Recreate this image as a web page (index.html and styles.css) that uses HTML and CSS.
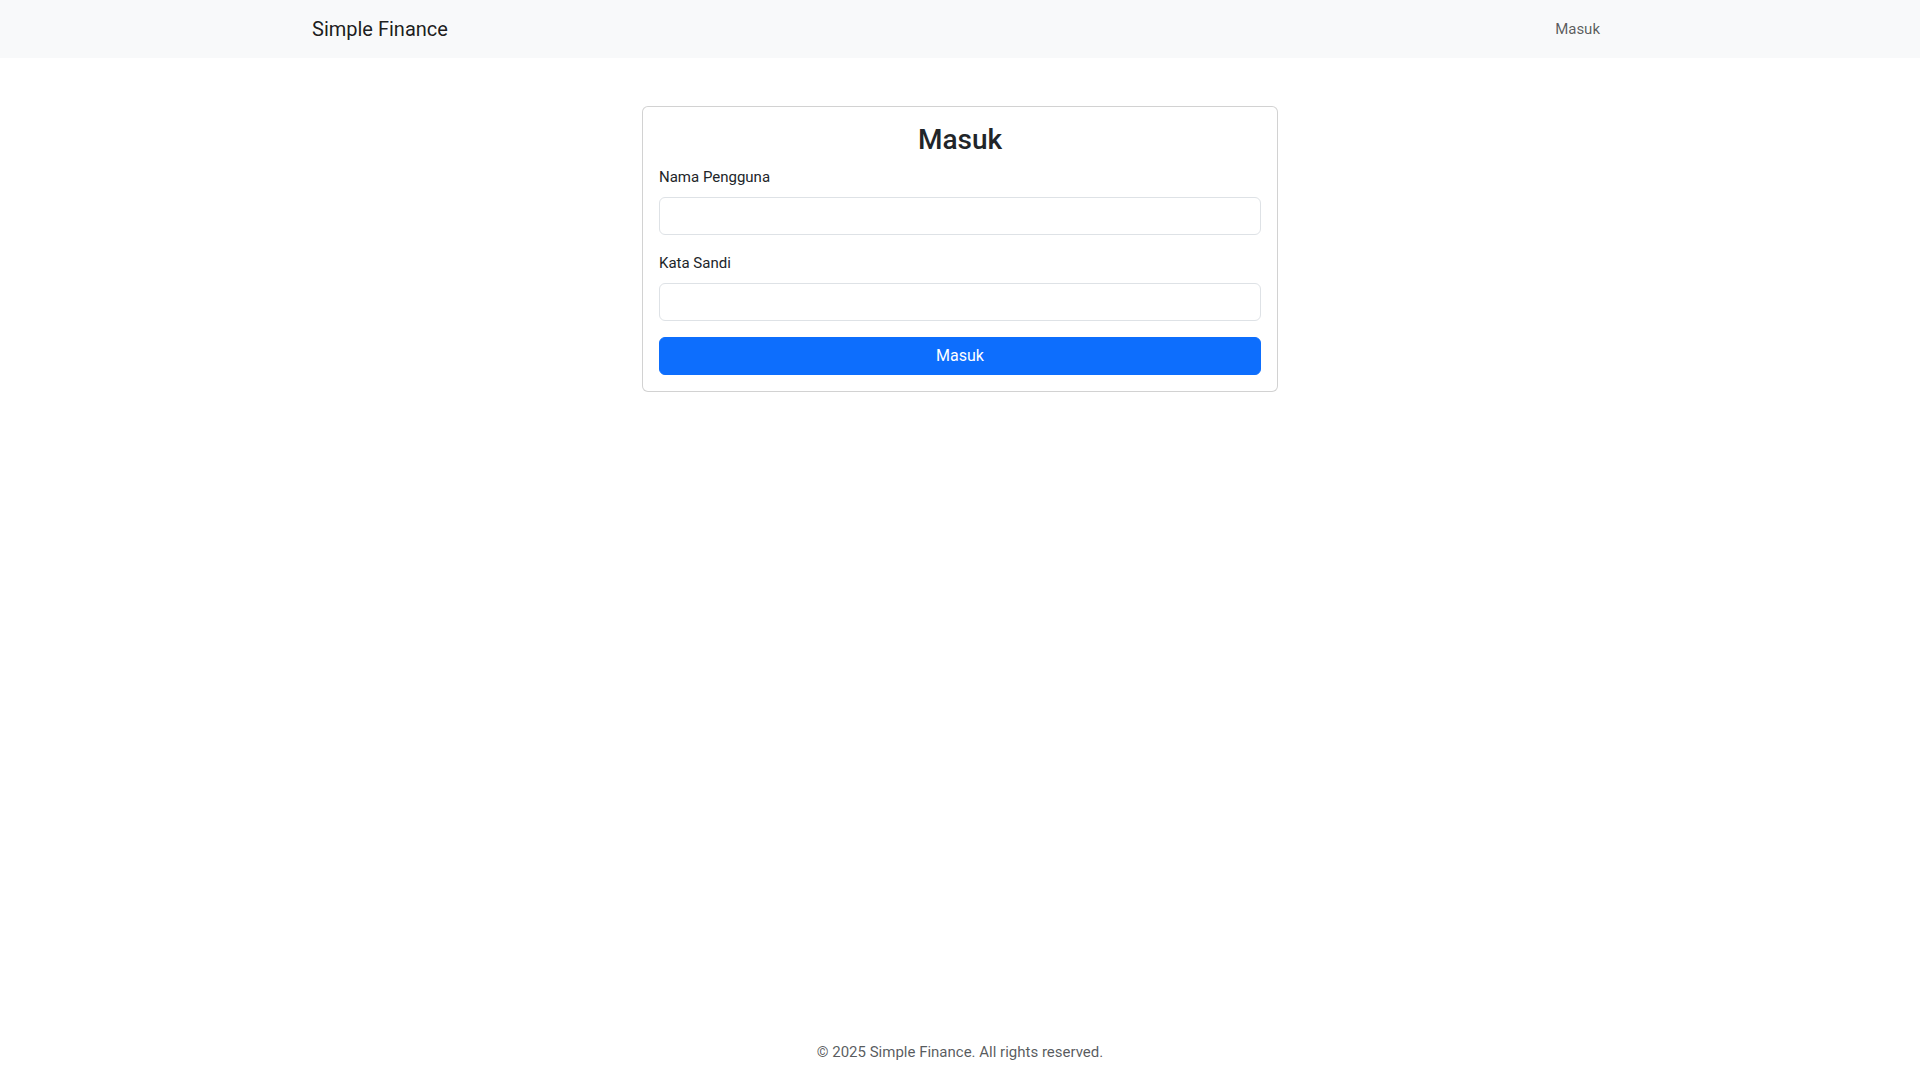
FILE: index.html
```html
<!DOCTYPE html>
<html lang="id">
<head>
<meta charset="utf-8">
<title>Masuk - Simple Finance</title>
<link rel="stylesheet" href="styles.css">
</head>
<body>
<div class="page">
  <nav class="navbar">
    <div class="container nav-inner">
      <a class="brand" href="#">Simple Finance</a>
      <ul class="nav-list">
        <li><a class="nav-link" href="#">Masuk</a></li>
      </ul>
    </div>
  </nav>
  <main class="container main">
    <div class="row">
      <div class="col">
        <div class="card">
          <div class="card-body">
            <h3 class="card-title">Masuk</h3>
            <form class="login-form">
              <div class="field">
                <label class="form-label" for="username">Nama Pengguna</label>
                <input class="form-control" type="text" id="username" name="username">
              </div>
              <div class="field">
                <label class="form-label" for="password">Kata Sandi</label>
                <input class="form-control" type="password" id="password" name="password">
              </div>
              <button class="btn-primary" type="submit">Masuk</button>
            </form>
          </div>
        </div>
      </div>
    </div>
  </main>
  <footer class="footer">
    <p class="footer-text">© 2025 Simple Finance. All rights reserved.</p>
  </footer>
</div>
</body>
</html>
```

FILE: styles.css
```css
* {
  box-sizing: border-box;
}

html, body {
  margin: 0;
  padding: 0;
}

body {
  font-family: Roboto, "Liberation Sans", Arial, sans-serif;
  font-size: 15px;
  line-height: 24px;
  color: #212529;
  background: #ffffff;
}

.page {
  min-height: 100vh;
  display: flex;
  flex-direction: column;
}

.container {
  width: 100%;
  max-width: 1320px;
  margin: 0 auto;
  padding: 0 12px;
}

.navbar {
  background: #f8f9fa;
  padding: 9px 0;
}

.nav-inner {
  display: flex;
  align-items: center;
  justify-content: space-between;
}

.brand {
  font-size: 20px;
  line-height: 30px;
  padding: 5px 0;
  color: rgba(0, 0, 0, 0.9);
  text-decoration: none;
  margin-right: 16px;
}

.nav-list {
  list-style: none;
  margin: 0;
  padding: 0;
  display: flex;
}

.nav-link {
  display: block;
  padding: 8px;
  font-size: 15px;
  line-height: 24px;
  color: rgba(0, 0, 0, 0.65);
  text-decoration: none;
}

.main {
  margin-top: 48px;
}

.row {
  display: flex;
  justify-content: center;
  margin: 0 -12px;
}

.col {
  width: 50%;
  padding: 0 12px;
}

.card {
  border: 1px solid rgba(0, 0, 0, 0.175);
  border-radius: 6px;
  background: #fff;
}

.card-body {
  padding: 16px;
}

.card-title {
  margin: 0 0 8px;
  font-size: 28px;
  font-weight: 500;
  line-height: 1.2;
  text-align: center;
  color: #212529;
}

.login-form {
  margin: 0;
}

.field {
  margin-bottom: 16px;
}

.form-label {
  display: inline-block;
  margin-bottom: 8px;
  font-size: 15px;
  line-height: 24px;
}

.form-control {
  display: block;
  width: 100%;
  padding: 6px 12px;
  font-family: inherit;
  font-size: 16px;
  line-height: 24px;
  color: #212529;
  background: #fff;
  border: 1px solid #dee2e6;
  border-radius: 6px;
  outline: none;
}

.btn-primary {
  display: block;
  width: 100%;
  padding: 6px 12px;
  font-family: inherit;
  font-size: 16px;
  line-height: 24px;
  color: #fff;
  background: #0d6efd;
  border: 1px solid #0d6efd;
  border-radius: 6px;
  cursor: pointer;
}

.footer {
  margin-top: auto;
  padding: 16px 0;
  text-align: center;
}

.footer-text {
  margin: 0;
  font-size: 15px;
  color: rgba(33, 37, 41, 0.75);
  line-height: 24px;
}
```
